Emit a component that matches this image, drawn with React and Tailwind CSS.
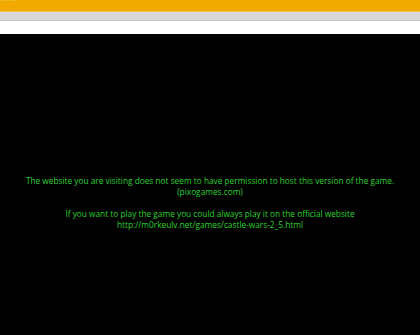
export default function App() {
  return (
    <div className="w-[420px] h-[335px] flex flex-col bg-black overflow-hidden" style={{ fontFamily: '"Open Sans", sans-serif' }}>
      <div className="h-[11px] bg-[#f0aa00] overflow-hidden">
        <div className="text-[9px] leading-none text-[#f6d070] -mt-[7px] ml-[1px]">Info</div>
      </div>
      <div className="h-[1px] bg-[#f2c050]" />
      <div className="h-[8px] bg-[#d9d9d9]" />
      <div className="h-[1px] bg-[#c8c8c8]" />
      <div className="h-[13px] bg-white" />
      <div className="flex-1 bg-black flex flex-col items-center pt-[141px] text-[8.3px] leading-[11px] text-[#2fd22f] text-center">
        <p>The website you are visiting does not seem to have permission to host this version of the game.</p>
        <p>(pixogames.com)</p>
        <p className="mt-[11px]">If you want to play the game you could always play it on the official website</p>
        <p>http://m0rkeulv.net/games/castle-wars-2_5.html</p>
      </div>
    </div>
  );
}
